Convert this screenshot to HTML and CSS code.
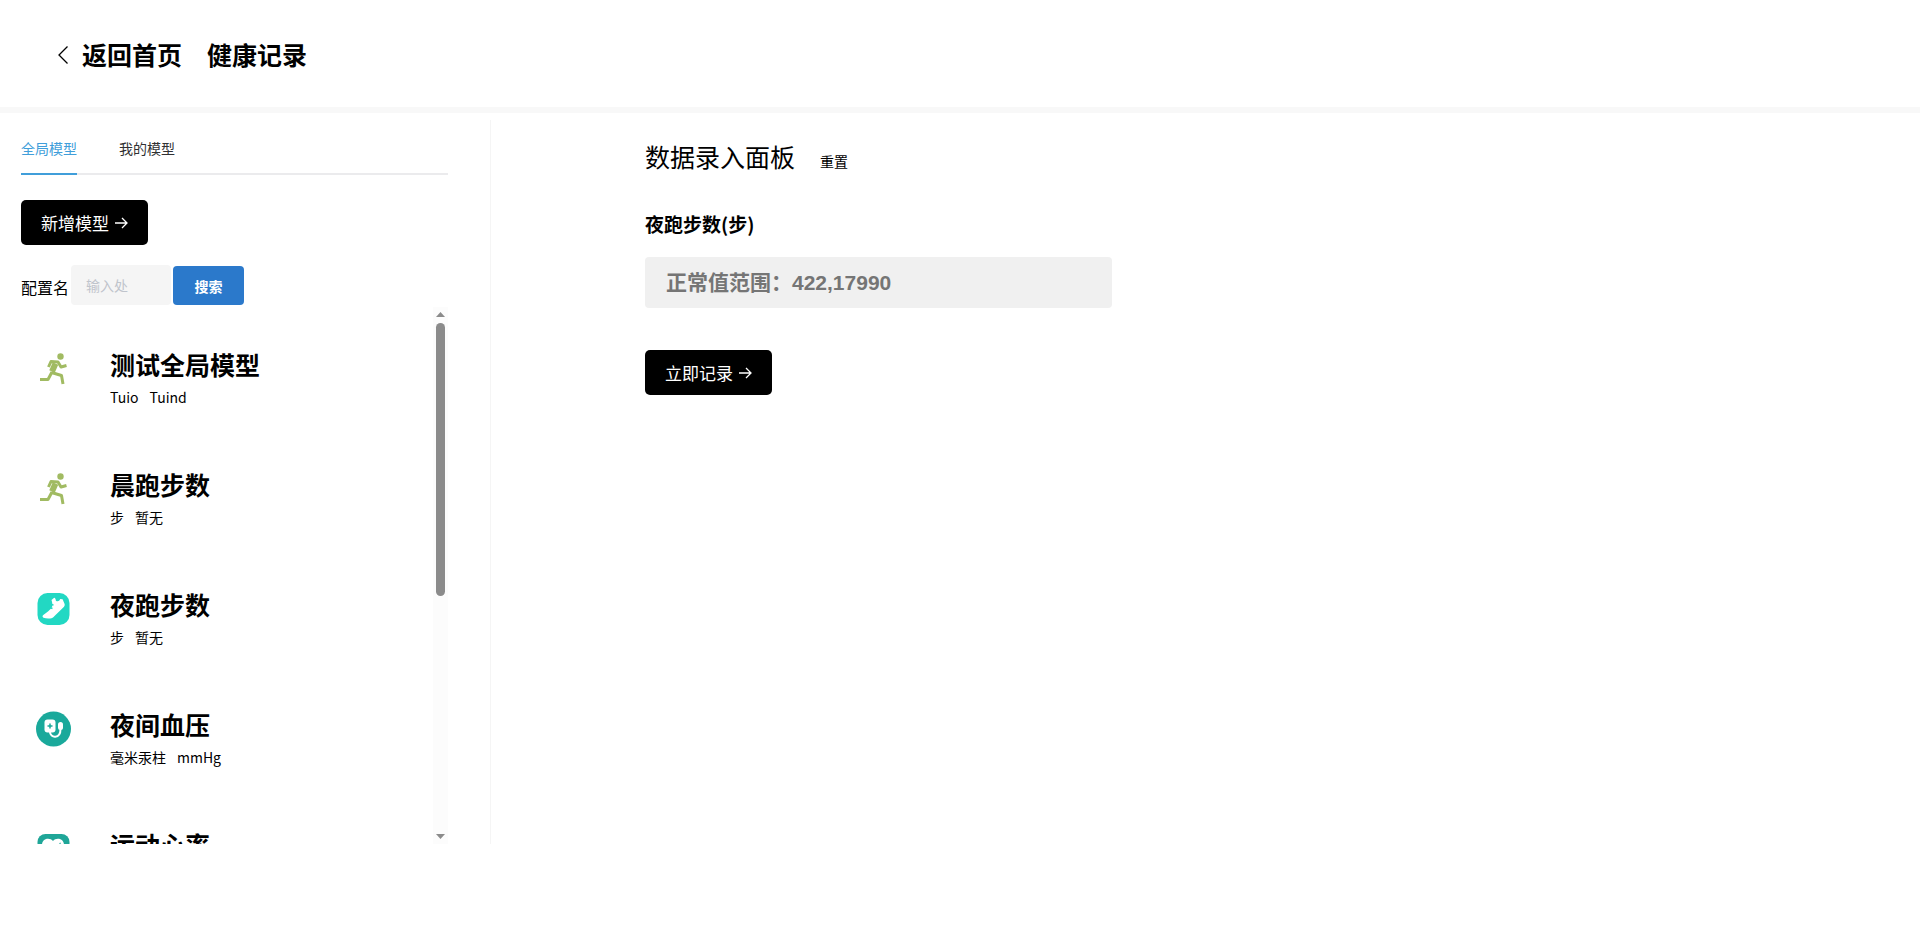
FILE: index.html
```html
<!DOCTYPE html>
<html lang="zh-CN">
  <head>
    <meta charset="UTF-8" />
    <meta name="viewport" content="width=device-width, initial-scale=1.0" />
    <title>健康记录</title>
    <link rel="stylesheet" href="styles.css">
  </head>
  <body>
    <!-- Header -->
    <header class="header">
      <a class="back" href="#">
        <svg class="back-icon" viewBox="0 0 12 20">
          <path d="M10.500 2.500 2 11l8.500 8.500" />
        </svg>
        返回首页
      </a>
      <h1 class="page-title">健康记录</h1>
    </header>

    <div class="main">
      <!-- Model list -->
      <aside class="sidebar">
        <nav class="tabs">
          <a class="tab active" href="#">全局模型</a>
          <a class="tab" href="#">我的模型</a>
        </nav>

        <button class="btn-dark" type="button">
          新增模型
          <svg class="arrow" viewBox="0 0 14 14">
            <path d="M1 7h12M8 2l5 5-5 5" />
          </svg>
        </button>

        <form class="search">
          <label class="search-label" for="configName">配置名</label>
          <input class="search-input" id="configName" type="text" placeholder="输入处" />
          <button class="btn-search" type="button">搜索</button>
        </form>

        <div class="model-box">
          <ul class="model-list">
            <li class="model">
              <svg class="model-icon" viewBox="0 0 36 36">
                <g class="runner">
                  <circle cx="25.500" cy="5.500" r="3.200" />
                  <path d="M13.500 16l2.500-5.500 7 .5 3 5 5.500-1.500M16.500 21.500l10 3 1.500 8.500M17 21l-4 7.500H5" />
                  <path class="runner-body" d="M20.500 12.500l-3.500 8" />
                </g>
              </svg>
              <div class="model-info">
                <h2 class="model-name">测试全局模型</h2>
                <p class="model-unit"><span>Tuio</span><span>Tuind</span></p>
              </div>
            </li>
            <li class="model">
              <svg class="model-icon" viewBox="0 0 36 36">
                <g class="runner">
                  <circle cx="25.500" cy="5.500" r="3.200" />
                  <path d="M13.500 16l2.500-5.500 7 .5 3 5 5.500-1.500M16.500 21.500l10 3 1.500 8.500M17 21l-4 7.500H5" />
                  <path class="runner-body" d="M20.500 12.500l-3.500 8" />
                </g>
              </svg>
              <div class="model-info">
                <h2 class="model-name">晨跑步数</h2>
                <p class="model-unit"><span>步</span><span>暂无</span></p>
              </div>
            </li>
            <li class="model">
              <svg class="model-icon" viewBox="0 0 36 36">
                <rect x="2.500" y="2" width="32" height="32" rx="10" fill="#22d8c3" />
                <path fill="#fff" d="M16.500 9l2.700-2.300c1 .2 1.500 1.300 1.700 3 1.700 1.100 3.400.6 4.300-1.700l2.400.2 2 4.800c.3 1.300 0 2-.8 3L19.500 25c-1.200 1.500-2.400 2.300-4.300 2.400-2.400.2-4.800.1-6.700-.7-1.300-.8-1.300-2 .1-3 3.200-2.100 6.500-4.500 8.400-7.700.8-2.400.2-4.800-.5-7z" />
                <path class="lace" stroke="#22d8c3" d="M15.500 13.500l3 .5M14.500 16.500l3 1" />
              </svg>
              <div class="model-info">
                <h2 class="model-name">夜跑步数</h2>
                <p class="model-unit"><span>步</span><span>暂无</span></p>
              </div>
            </li>
            <li class="model">
              <svg class="model-icon" viewBox="0 0 36 36">
                <circle cx="18.500" cy="18" r="17.500" fill="#1aa99b" />
                <rect x="9.500" y="8.500" width="11" height="13" rx="3" fill="#fff" />
                <path class="cross" stroke="#1aa99b" d="M15 12.500v5M12.500 15h5" />
                <path class="tube" d="M15 21c0 6 10.500 7.500 10.500-3" />
                <rect x="23" y="11" width="5" height="8" rx="2.500" fill="#fff" />
              </svg>
              <div class="model-info">
                <h2 class="model-name">夜间血压</h2>
                <p class="model-unit"><span>毫米汞柱</span><span>mmHg</span></p>
              </div>
            </li>
            <li class="model">
              <svg class="model-icon" viewBox="0 0 36 36">
                <rect x="2.500" y="3" width="32" height="32" rx="8" fill="#1fa698" />
                <path fill="#fff" d="M18 10c3-4 11-3 11 4 0 7-7 12-11 16-4-4-11-9-11-16 0-7 8-8 11-4z" />
                <path class="pulse" stroke="#1fa698" d="M8 19h6l3-4 3 7 5-9 2 6" />
              </svg>
              <div class="model-info">
                <h2 class="model-name">运动心率</h2>
              </div>
            </li>
          </ul>
          <div class="scrollbar">
            <svg class="scroll-arrow" viewBox="0 0 9 5"><path d="M4.500 0 9 5H0z" /></svg>
            <div class="scroll-track"><div class="scroll-thumb"></div></div>
            <svg class="scroll-arrow" viewBox="0 0 9 5"><path d="M0 0h9L4.500 5z" /></svg>
          </div>
        </div>
      </aside>

      <!-- Record form -->
      <section class="panel">
        <div class="panel-head">
          <h2 class="panel-title">数据录入面板</h2>
          <button class="btn-reset" type="button">重置</button>
        </div>
        <form class="record">
          <label class="record-label" for="steps">夜跑步数(步)</label>
          <input class="record-input" id="steps" type="text" placeholder="正常值范围：422,17990" />
          <button class="btn-dark" type="button">
            立即记录
            <svg class="arrow" viewBox="0 0 14 14">
              <path d="M1 7h12M8 2l5 5-5 5" />
            </svg>
          </button>
        </form>
      </section>
    </div>
  </body>
</html>
```

FILE: styles.css
```css
* {
  box-sizing: border-box;
}

body {
  margin: 0;
  font-family: "Noto Sans CJK SC", sans-serif;
  font-size: 16px;
  color: #000;
  background: #fff;
}

h1,
h2,
p,
ul {
  margin: 0;
  padding: 0;
}

a {
  color: inherit;
  text-decoration: none;
}

button,
input {
  font-family: inherit;
  border: none;
  outline: none;
}

button {
  cursor: pointer;
}

/* Header */
.header {
  display: flex;
  align-items: center;
  gap: 25px;
  height: 113px;
  padding: 0 57px;
  border-bottom: 6px solid #f8f8f8;
}

.back {
  display: flex;
  align-items: center;
  gap: 13px;
  font-size: 25px;
  font-weight: bold;
}

.back-icon {
  width: 12px;
  height: 20px;
  fill: none;
  stroke: #000;
  stroke-width: 1.3;
  overflow: visible;
}

.page-title {
  font-size: 25px;
}

.main {
  display: flex;
  padding-top: 7px;
}

/* Sidebar */
.sidebar {
  width: 491px;
  padding: 0 42px 0 21px;
  border-right: 1px solid #f5f5f5;
}

.tabs {
  display: flex;
  gap: 42px;
  margin-bottom: 25px;
  box-shadow: inset 0 -2px #ebebed;
}

.tab {
  height: 55px;
  font-size: 14px;
  line-height: 56px;
  color: #303133;
}

.tab.active {
  color: #409eda;
  border-bottom: 2px solid #409eda;
}

.btn-dark {
  display: flex;
  align-items: center;
  gap: 5px;
  height: 45px;
  padding: 0 20px;
  font-size: 17px;
  color: #fff;
  background: #000;
  border-radius: 5px;
}

.arrow {
  width: 14px;
  height: 14px;
  fill: none;
  stroke: #fff;
  stroke-width: 1.3;
}

.search {
  display: flex;
  align-items: flex-end;
  margin-top: 20px;
}

.search-label {
  width: 50px;
  line-height: 36px;
}

.search-input {
  width: 100px;
  height: 40px;
  padding: 0 15px;
  font-size: 14px;
  background: #f5f5f5;
  border-radius: 4px;
}

.search-input::placeholder {
  color: #c0c4cc;
}

.btn-search {
  width: 71px;
  height: 39px;
  margin-left: 2px;
  font-size: 14px;
  font-weight: bold;
  color: #fff;
  background: #2b79cb;
  border-radius: 4px;
}

/* Model list */
.model-box {
  display: flex;
  height: calc(100vh - 395px);
  min-height: 240px;
  margin-top: 2px;
}

.model-list {
  flex: 1;
  padding-top: 20px;
  overflow: hidden;
  list-style: none;
}

.model {
  display: flex;
  gap: 39px;
  height: 120px;
  padding: 19px 14px;
}

.model-icon {
  flex: none;
  width: 36px;
  height: 36px;
  margin-top: 5px;
}

.runner {
  fill: #a1bb62;
}

.runner path {
  fill: none;
  stroke: #a1bb62;
  stroke-width: 3;
  stroke-linejoin: round;
}

.runner .runner-body {
  stroke-width: 6;
}

.lace,
.cross,
.tube,
.pulse {
  fill: none;
  stroke-width: 1.500;
}

.tube {
  stroke: #fff;
  stroke-width: 2;
}

.model-name {
  font-size: 25px;
  line-height: 36px;
}

.model-unit {
  display: flex;
  gap: 11px;
  font-size: 14px;
  line-height: 30px;
}

/* Scrollbar */
.scrollbar {
  display: flex;
  flex-direction: column;
  align-items: center;
  gap: 6px;
  width: 15px;
  padding: 5px 0;
  background: #fcfcfc;
}

.scroll-arrow {
  flex: none;
  width: 11px;
  height: 5px;
  fill: #8b8b8b;
}

.scroll-track {
  flex: 1;
  width: 9px;
}

.scroll-thumb {
  height: 54%;
  background: #8b8b8b;
  border-radius: 5px;
}

/* Record panel */
.panel {
  flex: 1;
  padding: 16px 154px;
}

.panel-head {
  display: flex;
  align-items: baseline;
  gap: 25px;
}

.panel-title {
  font-size: 25px;
  font-weight: normal;
  line-height: 40px;
}

.btn-reset {
  padding: 0;
  font-size: 14px;
  color: #000;
  background: none;
}

.record {
  display: flex;
  flex-direction: column;
  align-items: flex-start;
  margin-top: 34px;
}

.record-label {
  font-size: 19px;
  font-weight: bold;
  line-height: 28px;
}

.record-input {
  width: 100%;
  max-width: 467px;
  height: 51px;
  margin: 19px 0 42px;
  padding: 0 21px;
  font-family: "Liberation Sans", "Noto Sans CJK SC", sans-serif;
  font-size: 21px;
  font-weight: bold;
  background: #f0f0f0;
  border-radius: 4px;
}

.record-input::placeholder {
  color: #757575;
}
```
